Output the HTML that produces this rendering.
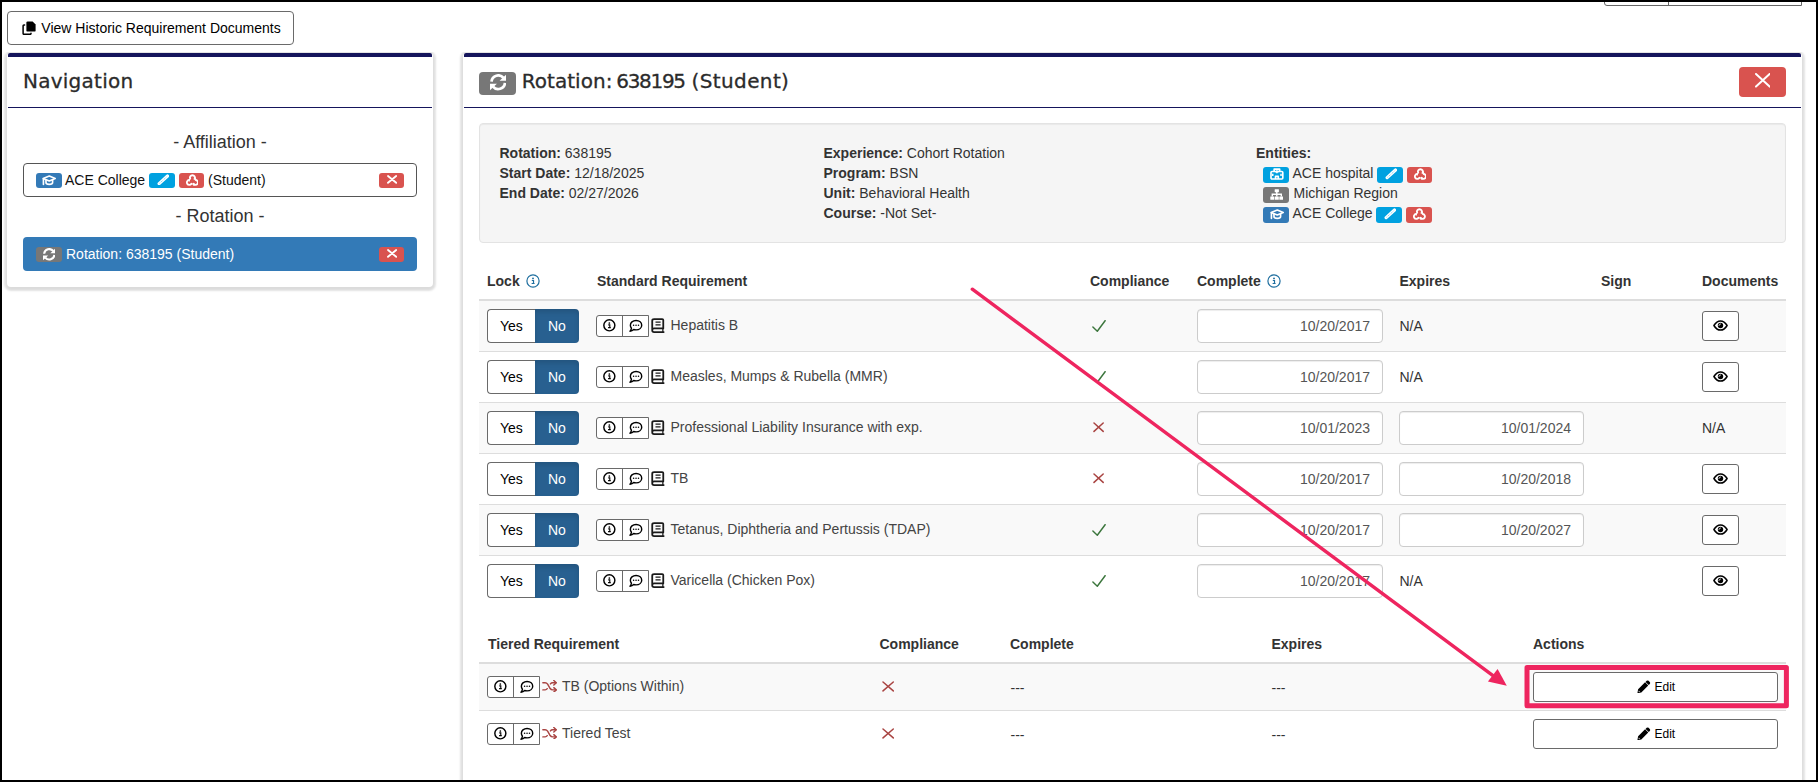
<!DOCTYPE html><html lang="en"><head><meta charset="utf-8"><title>Rotation: 638195 (Student)</title>
<style>
html,body{margin:0;padding:0;}
body{width:1818px;height:782px;position:relative;overflow:hidden;background:#fff;font-family:"Liberation Sans",sans-serif;font-size:14px;color:#333;}
.panel{position:absolute;background:#fff;border-radius:4px;box-shadow:0 1px 2px 3px rgba(0,0,0,.11),0 2px 2px 1px rgba(0,0,0,.03);box-sizing:border-box;clip-path:inset(-1px -9px -9px -9px);}
.bar{position:absolute;height:4px;background:#15155c;border-radius:2px 2px 0 0;}
.hl{position:absolute;height:1px;background:#15155c;}
.btn{position:absolute;box-sizing:border-box;border:1px solid #666;border-radius:4px;background:#fff;}
.frame{position:absolute;left:0;top:0;width:1814px;height:778px;border:2px solid #000;z-index:50;pointer-events:none;}
.th{font-weight:700;}
.inp{position:absolute;box-sizing:border-box;height:34px;border:1px solid #ccc;border-radius:4px;background:#fff;box-shadow:inset 0 1px 1px rgba(0,0,0,.075);}
</style></head><body>
<div style="position:absolute;left:1604px;top:-30px;width:198px;height:36px;box-sizing:border-box;border:1px solid #666;border-radius:3px 0 0 3px;background:#fff;"></div>
<div style="position:absolute;left:1668px;top:-30px;width:1px;height:35px;background:#666;"></div>
<div style="position:absolute;left:7px;top:11px;width:287px;height:34px;box-sizing:border-box;border:1px solid #6a6a6a;border-radius:4px;background:#fff;"></div>
<div style="position:absolute;left:22px;top:21px;"><svg width="14" height="14" viewBox="0 0 14 14" style="display:block;"><path fill="#000" d="M5.6 0.4 H10.6 L13.6 3.4 V9.4 Q13.6 10.6 12.4 10.6 H5.6 Q4.4 10.6 4.4 9.4 V1.6 Q4.4 0.4 5.6 0.4 Z"/><path fill="none" stroke="#000" stroke-width="1.5" stroke-linejoin="round" stroke-linecap="round" d="M2.6 3.9 H1.9 Q1.1 3.9 1.1 4.7 V12.5 Q1.1 13.3 1.9 13.3 H8.2 Q9.0 13.3 9.0 12.5 V12.2"/></svg></div>
<div style="position:absolute;left:41.3px;top:18.15px;line-height:20px;font-size:14px;font-weight:400;color:#000;font-family:'Liberation Sans',sans-serif;white-space:nowrap;">View Historic Requirement Documents</div>
<div class="panel" style="left:7px;top:53px;width:426px;height:234px;"></div><div class="bar" style="left:8px;top:53px;width:424px;"></div>
<div style="position:absolute;left:23px;top:71.38px;line-height:20px;font-size:20px;font-weight:400;color:#2b2b2b;font-family:'DejaVu Sans',sans-serif;white-space:nowrap;letter-spacing:0.25px;-webkit-text-stroke:0.3px #2b2b2b;">Navigation</div>
<div class="hl" style="left:8px;top:107px;width:424px;"></div>
<div style="position:absolute;left:8px;width:424px;text-align:center;top:130.26px;line-height:25px;font-size:18px;color:#333;">- Affiliation -</div>
<div style="position:absolute;left:23px;top:163px;width:394px;height:34px;box-sizing:border-box;border:1px solid #555;border-radius:4px;background:#fff;"></div>
<div style="position:absolute;left:36px;top:173px;width:26px;height:15px;background:#337ab7;border-radius:3px;"><div style="position:absolute;left:6.4px;top:2.2px;"><svg width="14.2" height="10.4" viewBox="0 0 15 11" style="display:block;"><g fill="none" stroke="#fff" stroke-width="1.75" stroke-linejoin="round" stroke-linecap="round"><path d="M1.2 3.7 L7.7 1.1 L14 3.7 L7.7 6.3 Z"/><path d="M4.2 5.4 V8 C4.2 10.6 11.2 10.6 11.2 8 V5.4"/><path d="M1.5 4.2 V10"/></g></svg></div></div>
<div style="position:absolute;left:65px;top:170.45px;line-height:20px;font-size:14px;font-weight:400;color:#111;font-family:'Liberation Sans',sans-serif;white-space:nowrap;">ACE College</div>
<div style="position:absolute;left:149px;top:173px;width:26px;height:15px;background:#00a1e0;border-radius:3px;"><div style="position:absolute;left:7.6px;top:0.8px;"><svg width="12.6" height="11.6" viewBox="0 0 13 12" style="display:block;"><path d="M2.2 10.0 L10.9 2.1" stroke="#fff" stroke-width="3.3" stroke-linecap="round" fill="none"/><path d="M2.6 9.6 L10.5 2.5" stroke="#00a1e0" stroke-width="0.8" stroke-dasharray="1.1 1" opacity=".75" fill="none"/></svg></div></div>
<div style="position:absolute;left:179px;top:173px;width:25px;height:15px;background:#d9534f;border-radius:3px;"><div style="position:absolute;left:6.6px;top:0.9px;"><svg width="12.8" height="12.2" viewBox="0 0 13 12.4" style="display:block;"><path d="M4.23 4.76 A2.5 2.5 0 1 1 8.77 4.76 M9.82 6.11 A2.5 2.5 0 1 1 7.55 10.03 M5.45 10.03 A2.5 2.5 0 1 1 3.18 6.11" fill="none" stroke="#fff" stroke-width="1.9" stroke-linecap="round"/><path fill="#fff" d="M7.6 5.9 L10.4 5.2 L9.3 2.9 Z M8.6 9.2 L6.3 10.9 L8.6 12.4 Z M1.0 6.4 L3.7 5.4 L4.0 8.0 Z"/></svg></div></div>
<div style="position:absolute;left:208px;top:170.45px;line-height:20px;font-size:14px;font-weight:400;color:#111;font-family:'Liberation Sans',sans-serif;white-space:nowrap;">(Student)</div>
<div style="position:absolute;left:379px;top:173px;width:25px;height:15px;background:#d9534f;border-radius:3px;"><div style="position:absolute;left:7.5px;top:2.3px;"><svg width="10.2" height="8.8" viewBox="0 0 10.2 8.8" style="display:block;"><path d="M1 1 L9.2 7.800000000000001 M9.2 1 L1 7.800000000000001" stroke="#fff" stroke-width="1.85" stroke-linecap="round" fill="none"/></svg></div></div>
<div style="position:absolute;left:8px;width:424px;text-align:center;top:204.26px;line-height:25px;font-size:18px;color:#333;">- Rotation -</div>
<div style="position:absolute;left:23px;top:237px;width:394px;height:34px;border-radius:4px;background:#337ab7;"></div>
<div style="position:absolute;left:36px;top:247px;width:26px;height:15px;background:#777;border-radius:3px;"><div style="position:absolute;left:6.7px;top:1.2px;"><svg width="12.6" height="12.6" viewBox="0 0 16 16" style="display:block;"><g fill="none" stroke="#fff" stroke-width="2.7"><path d="M1.45 7.3 A6.6 6.6 0 0 1 13.1 3.8"/><path d="M14.55 8.7 A6.6 6.6 0 0 1 2.9 12.2"/></g><path fill="#fff" d="M16 0.3 V6.6 H9.3 Z"/><path fill="#fff" d="M0 15.7 V9.4 H6.7 Z"/></svg></div></div>
<div style="position:absolute;left:66px;top:244.45px;line-height:20px;font-size:14px;font-weight:400;color:#fff;font-family:'Liberation Sans',sans-serif;white-space:nowrap;">Rotation: 638195 (Student)</div>
<div style="position:absolute;left:379px;top:247px;width:25px;height:15px;background:#d9534f;border-radius:3px;"><div style="position:absolute;left:7.5px;top:2.3px;"><svg width="10.2" height="8.8" viewBox="0 0 10.2 8.8" style="display:block;"><path d="M1 1 L9.2 7.800000000000001 M9.2 1 L1 7.800000000000001" stroke="#fff" stroke-width="1.85" stroke-linecap="round" fill="none"/></svg></div></div>
<div class="panel" style="left:463px;top:53px;width:1339px;height:760px;"></div><div class="bar" style="left:464px;top:53px;width:1337px;"></div>
<div style="position:absolute;left:479px;top:72px;width:37px;height:23px;background:#777;border-radius:4px;"><div style="position:absolute;left:10.8px;top:2.2px;"><svg width="16.5" height="16.5" viewBox="0 0 16 16" style="display:block;"><g fill="none" stroke="#fff" stroke-width="2.7"><path d="M1.45 7.3 A6.6 6.6 0 0 1 13.1 3.8"/><path d="M14.55 8.7 A6.6 6.6 0 0 1 2.9 12.2"/></g><path fill="#fff" d="M16 0.3 V6.6 H9.3 Z"/><path fill="#fff" d="M0 15.7 V9.4 H6.7 Z"/></svg></div></div>
<div style="position:absolute;left:521.7px;top:71.28px;line-height:20px;font-size:20px;font-weight:400;color:#2b2b2b;font-family:'DejaVu Sans',sans-serif;white-space:nowrap;-webkit-text-stroke:0.3px #2b2b2b;"><span style="letter-spacing:0.04px">Rotation:</span></div>
<div style="position:absolute;left:616.3px;top:71.28px;line-height:20px;font-size:20px;font-weight:400;color:#2b2b2b;font-family:'DejaVu Sans',sans-serif;white-space:nowrap;-webkit-text-stroke:0.3px #2b2b2b;"><span style="letter-spacing:-1.33px">638195</span></div>
<div style="position:absolute;left:691.6px;top:71.28px;line-height:20px;font-size:20px;font-weight:400;color:#2b2b2b;font-family:'DejaVu Sans',sans-serif;white-space:nowrap;-webkit-text-stroke:0.3px #2b2b2b;"><span style="letter-spacing:0.37px">(Student)</span></div>
<div style="position:absolute;left:1739px;top:67px;width:47px;height:30px;background:#d9534f;border-radius:4px;"><div style="position:absolute;left:15.9px;top:6.4px;"><svg width="15.6" height="14.6" viewBox="0 0 15.6 14.6" style="display:block;"><path d="M1 1 L14.6 13.6 M14.6 1 L1 13.6" stroke="#fff" stroke-width="2" stroke-linecap="round" fill="none"/></svg></div></div>
<div class="hl" style="left:464px;top:107px;width:1337px;"></div>
<div style="position:absolute;left:479px;top:123px;width:1307px;height:120px;box-sizing:border-box;background:#f5f5f5;border:1px solid #e3e3e3;border-radius:4px;box-shadow:inset 0 1px 1px rgba(0,0,0,.05);"></div>
<div style="position:absolute;left:499.5px;top:143.15px;line-height:20px;font-size:14px;font-weight:400;color:#333;font-family:'Liberation Sans',sans-serif;white-space:nowrap;"><b>Rotation:</b> 638195</div>
<div style="position:absolute;left:499.5px;top:163.15px;line-height:20px;font-size:14px;font-weight:400;color:#333;font-family:'Liberation Sans',sans-serif;white-space:nowrap;"><b>Start Date:</b> 12/18/2025</div>
<div style="position:absolute;left:499.5px;top:183.15px;line-height:20px;font-size:14px;font-weight:400;color:#333;font-family:'Liberation Sans',sans-serif;white-space:nowrap;"><b>End Date:</b> 02/27/2026</div>
<div style="position:absolute;left:823.5px;top:143.15px;line-height:20px;font-size:14px;font-weight:400;color:#333;font-family:'Liberation Sans',sans-serif;white-space:nowrap;"><b>Experience:</b> Cohort Rotation</div>
<div style="position:absolute;left:823.5px;top:163.15px;line-height:20px;font-size:14px;font-weight:400;color:#333;font-family:'Liberation Sans',sans-serif;white-space:nowrap;"><b>Program:</b> BSN</div>
<div style="position:absolute;left:823.5px;top:183.15px;line-height:20px;font-size:14px;font-weight:400;color:#333;font-family:'Liberation Sans',sans-serif;white-space:nowrap;"><b>Unit:</b> Behavioral Health</div>
<div style="position:absolute;left:823.5px;top:203.15px;line-height:20px;font-size:14px;font-weight:400;color:#333;font-family:'Liberation Sans',sans-serif;white-space:nowrap;"><b>Course:</b> -Not Set-</div>
<div style="position:absolute;left:1256px;top:143.15px;line-height:20px;font-size:14px;font-weight:400;color:#333;font-family:'Liberation Sans',sans-serif;white-space:nowrap;"><b>Entities:</b></div>
<div style="position:absolute;left:1263px;top:167px;width:26px;height:16px;background:#00a1e0;border-radius:3px;"><div style="position:absolute;left:7.2px;top:1.3px;"><svg width="13.8" height="11.8" viewBox="0 0 14 12" style="display:block;"><g fill="none" stroke="#fff" stroke-width="1.7" stroke-linejoin="round"><rect x="1" y="3.6" width="12" height="7.6" rx="1"/><path d="M4.2 3.6 V1.2 H9.8 V3.6"/><path d="M5.6 11.2 V8.6 H8.4 V11.2"/></g><path d="M7 2.2 V5.4 M5.4 3.8 H8.6 M2.8 5.8 V8.2 M11.2 5.8 V8.2" stroke="#fff" stroke-width="1.5" fill="none"/></svg></div></div>
<div style="position:absolute;left:1292.5px;top:163.15px;line-height:20px;font-size:14px;font-weight:400;color:#333;font-family:'Liberation Sans',sans-serif;white-space:nowrap;">ACE hospital</div>
<div style="position:absolute;left:1377px;top:167px;width:26px;height:16px;background:#00a1e0;border-radius:3px;"><div style="position:absolute;left:7.6px;top:1.3px;"><svg width="12.6" height="11.6" viewBox="0 0 13 12" style="display:block;"><path d="M2.2 10.0 L10.9 2.1" stroke="#fff" stroke-width="3.3" stroke-linecap="round" fill="none"/><path d="M2.6 9.6 L10.5 2.5" stroke="#00a1e0" stroke-width="0.8" stroke-dasharray="1.1 1" opacity=".75" fill="none"/></svg></div></div>
<div style="position:absolute;left:1407px;top:167px;width:25px;height:16px;background:#d9534f;border-radius:3px;"><div style="position:absolute;left:6.6px;top:1.1px;"><svg width="12.8" height="12.2" viewBox="0 0 13 12.4" style="display:block;"><path d="M4.23 4.76 A2.5 2.5 0 1 1 8.77 4.76 M9.82 6.11 A2.5 2.5 0 1 1 7.55 10.03 M5.45 10.03 A2.5 2.5 0 1 1 3.18 6.11" fill="none" stroke="#fff" stroke-width="1.9" stroke-linecap="round"/><path fill="#fff" d="M7.6 5.9 L10.4 5.2 L9.3 2.9 Z M8.6 9.2 L6.3 10.9 L8.6 12.4 Z M1.0 6.4 L3.7 5.4 L4.0 8.0 Z"/></svg></div></div>
<div style="position:absolute;left:1263px;top:187px;width:26px;height:16px;background:#777;border-radius:3px;"><div style="position:absolute;left:6.8px;top:2.2px;"><svg width="13.6" height="11" viewBox="0 0 13 11" style="display:block;"><g fill="#fff"><rect x="4.4" y="0.2" width="4.2" height="3" rx=".4"/><rect x="0" y="7.4" width="4" height="3.4" rx=".4"/><rect x="4.5" y="7.4" width="4" height="3.4" rx=".4"/><rect x="9" y="7.4" width="4" height="3.4" rx=".4"/></g><path d="M6.5 3 V7.6 M2 7.6 V5.3 H11 V7.6" fill="none" stroke="#fff" stroke-width="1.4"/></svg></div></div>
<div style="position:absolute;left:1293.5px;top:183.15px;line-height:20px;font-size:14px;font-weight:400;color:#333;font-family:'Liberation Sans',sans-serif;white-space:nowrap;">Michigan Region</div>
<div style="position:absolute;left:1263px;top:207px;width:26px;height:16px;background:#337ab7;border-radius:3px;"><div style="position:absolute;left:6.5px;top:2.4px;"><svg width="14.2" height="10.4" viewBox="0 0 15 11" style="display:block;"><g fill="none" stroke="#fff" stroke-width="1.75" stroke-linejoin="round" stroke-linecap="round"><path d="M1.2 3.7 L7.7 1.1 L14 3.7 L7.7 6.3 Z"/><path d="M4.2 5.4 V8 C4.2 10.6 11.2 10.6 11.2 8 V5.4"/><path d="M1.5 4.2 V10"/></g></svg></div></div>
<div style="position:absolute;left:1292.5px;top:203.15px;line-height:20px;font-size:14px;font-weight:400;color:#333;font-family:'Liberation Sans',sans-serif;white-space:nowrap;">ACE College</div>
<div style="position:absolute;left:1376px;top:207px;width:26px;height:16px;background:#00a1e0;border-radius:3px;"><div style="position:absolute;left:7.6px;top:1.3px;"><svg width="12.6" height="11.6" viewBox="0 0 13 12" style="display:block;"><path d="M2.2 10.0 L10.9 2.1" stroke="#fff" stroke-width="3.3" stroke-linecap="round" fill="none"/><path d="M2.6 9.6 L10.5 2.5" stroke="#00a1e0" stroke-width="0.8" stroke-dasharray="1.1 1" opacity=".75" fill="none"/></svg></div></div>
<div style="position:absolute;left:1406px;top:207px;width:26px;height:16px;background:#d9534f;border-radius:3px;"><div style="position:absolute;left:6.9px;top:1.1px;"><svg width="12.8" height="12.2" viewBox="0 0 13 12.4" style="display:block;"><path d="M4.23 4.76 A2.5 2.5 0 1 1 8.77 4.76 M9.82 6.11 A2.5 2.5 0 1 1 7.55 10.03 M5.45 10.03 A2.5 2.5 0 1 1 3.18 6.11" fill="none" stroke="#fff" stroke-width="1.9" stroke-linecap="round"/><path fill="#fff" d="M7.6 5.9 L10.4 5.2 L9.3 2.9 Z M8.6 9.2 L6.3 10.9 L8.6 12.4 Z M1.0 6.4 L3.7 5.4 L4.0 8.0 Z"/></svg></div></div>
<div style="position:absolute;left:487px;top:271.15px;line-height:20px;font-size:14px;font-weight:700;color:#333;font-family:'Liberation Sans',sans-serif;white-space:nowrap;">Lock</div>
<div style="position:absolute;left:526px;top:274px;"><svg width="14" height="14" viewBox="0 0 14 14" style="display:block;"><circle cx="7" cy="7" r="6.1" fill="none" stroke="#1f6f9f" stroke-width="1.2"/><circle cx="7" cy="4.4" r="0.95" fill="#1f6f9f"/><path d="M5.8 6.5 H7.5 V9.3 M5.6 9.5 H8.6" stroke="#1f6f9f" stroke-width="1.2" fill="none"/></svg></div>
<div style="position:absolute;left:597px;top:271.15px;line-height:20px;font-size:14px;font-weight:700;color:#333;font-family:'Liberation Sans',sans-serif;white-space:nowrap;">Standard Requirement</div>
<div style="position:absolute;left:1090px;top:271.15px;line-height:20px;font-size:14px;font-weight:700;color:#333;font-family:'Liberation Sans',sans-serif;white-space:nowrap;">Compliance</div>
<div style="position:absolute;left:1197px;top:271.15px;line-height:20px;font-size:14px;font-weight:700;color:#333;font-family:'Liberation Sans',sans-serif;white-space:nowrap;">Complete</div>
<div style="position:absolute;left:1267px;top:274px;"><svg width="14" height="14" viewBox="0 0 14 14" style="display:block;"><circle cx="7" cy="7" r="6.1" fill="none" stroke="#1f6f9f" stroke-width="1.2"/><circle cx="7" cy="4.4" r="0.95" fill="#1f6f9f"/><path d="M5.8 6.5 H7.5 V9.3 M5.6 9.5 H8.6" stroke="#1f6f9f" stroke-width="1.2" fill="none"/></svg></div>
<div style="position:absolute;left:1399.5px;top:271.15px;line-height:20px;font-size:14px;font-weight:700;color:#333;font-family:'Liberation Sans',sans-serif;white-space:nowrap;">Expires</div>
<div style="position:absolute;left:1601px;top:271.15px;line-height:20px;font-size:14px;font-weight:700;color:#333;font-family:'Liberation Sans',sans-serif;white-space:nowrap;">Sign</div>
<div style="position:absolute;left:1702px;top:271.15px;line-height:20px;font-size:14px;font-weight:700;color:#333;font-family:'Liberation Sans',sans-serif;white-space:nowrap;">Documents</div>
<div style="position:absolute;left:479px;top:299px;width:1307px;height:2px;background:#ddd;"></div>
<div style="position:absolute;left:479px;top:301px;width:1307px;height:50px;background:#f9f9f9;"></div>
<div style="position:absolute;left:487px;top:309px;width:49px;height:34px;box-sizing:border-box;border:1px solid #6a6a6a;border-right:none;border-radius:4px 0 0 4px;background:#fff;"></div>
<div style="position:absolute;left:535px;top:309px;width:44px;height:34px;border-radius:0 4px 4px 0;background:#286090;box-shadow:inset 0 3px 5px rgba(0,0,0,.125);"></div>
<div style="position:absolute;left:500px;top:316.15px;line-height:20px;font-size:14px;font-weight:400;color:#000;font-family:'Liberation Sans',sans-serif;white-space:nowrap;">Yes</div>
<div style="position:absolute;left:548px;top:316.15px;line-height:20px;font-size:14px;font-weight:400;color:#fff;font-family:'Liberation Sans',sans-serif;white-space:nowrap;">No</div>
<div style="position:absolute;left:596px;top:315px;width:53px;height:22px;box-sizing:border-box;border:1px solid #6a6a6a;border-radius:3px 0 0 3px;background:#fff;"></div><div style="position:absolute;left:622px;top:315px;width:1px;height:22px;background:#6a6a6a;"></div><div style="position:absolute;left:603.2px;top:319.4px;"><svg width="12.7" height="12.7" viewBox="0 0 14 14" style="display:block;"><circle cx="7" cy="7" r="6.1" fill="none" stroke="#000" stroke-width="1.6"/><circle cx="7" cy="4.4" r="0.95" fill="#000"/><path d="M5.8 6.5 H7.5 V9.3 M5.6 9.5 H8.6" stroke="#000" stroke-width="1.2" fill="none"/></svg></div><div style="position:absolute;left:628.9px;top:318.6px;"><svg width="13.7" height="13.7" viewBox="0 0 14 13.5" style="display:block;"><path d="M7.2 1.3 C10.6 1.3 13 3.4 13 6.1 C13 8.8 10.6 10.9 7.2 10.9 C6.3 10.9 5.5 10.75 4.8 10.5 C3.9 11.4 2.6 12.1 1 12.2 C1.9 11.3 2.4 10.3 2.5 9.2 C1.8 8.3 1.4 7.3 1.4 6.1 C1.4 3.4 3.8 1.3 7.2 1.3 Z" fill="none" stroke="#000" stroke-width="1.45" stroke-linejoin="round"/><circle cx="4.7" cy="6.1" r=".8" fill="#000"/><circle cx="7.2" cy="6.1" r=".8" fill="#000"/><circle cx="9.7" cy="6.1" r=".8" fill="#000"/></svg></div>
<div style="position:absolute;left:651.2px;top:317.6px;"><svg width="13.8" height="15.33" viewBox="0 0 13.5 15" style="display:block;"><path d="M3 1 H11 Q12 1 12 2 V10.2 H3 Q1.2 10.2 1.2 12 Q1.2 13.8 3 13.8 H12.4 M1.2 12 V2.8 Q1.2 1 3 1" fill="none" stroke="#1a1a1a" stroke-width="1.75" stroke-linejoin="round" stroke-linecap="round"/><path d="M4.4 4.1 H9.4 M4.4 6.7 H9.4" stroke="#1a1a1a" stroke-width="1.3" fill="none"/><path d="M11.6 10.4 V13.6" stroke="#1a1a1a" stroke-width="1.2"/></svg></div>
<div style="position:absolute;left:670.5px;top:315.15px;line-height:20px;font-size:14px;font-weight:400;color:#444;font-family:'Liberation Sans',sans-serif;white-space:nowrap;">Hepatitis B</div>
<div style="position:absolute;left:1092px;top:320.3px;"><svg width="14" height="13" viewBox="0 0 14 13" style="display:block;"><path d="M0.9 7.0 L5.3 11.2 L13.1 0.7" fill="none" stroke="#3c763d" stroke-width="1.45" stroke-linecap="round" stroke-linejoin="round"/></svg></div>
<div class="inp" style="left:1197px;top:309px;width:186px;"></div>
<div style="position:absolute;left:1197px;top:316.15px;line-height:20px;font-size:14px;font-weight:400;color:#555;font-family:'Liberation Sans',sans-serif;white-space:nowrap;width:173px;text-align:right;">10/20/2017</div>
<div style="position:absolute;left:1399.5px;top:316.15px;line-height:20px;font-size:14px;font-weight:400;color:#333;font-family:'Liberation Sans',sans-serif;white-space:nowrap;">N/A</div>
<div style="position:absolute;left:1702px;top:311px;width:37px;height:30px;box-sizing:border-box;border:1px solid #6a6a6a;border-radius:3px;background:#fff;"><div style="position:absolute;left:10.1px;top:8.3px;"><svg width="15" height="11" viewBox="0 0 15 11" style="display:block;"><path d="M0.9 5.5 C3 2 5.4 0.9 7.5 0.9 C9.6 0.9 12 2 14.1 5.5 C12 9 9.6 10.1 7.5 10.1 C5.4 10.1 3 9 0.9 5.5 Z" fill="none" stroke="#000" stroke-width="1.5" stroke-linejoin="round"/><circle cx="7.5" cy="5.5" r="2.7" fill="#000"/><path d="M7.6 3.9 A1.7 1.7 0 0 0 5.9 5.5" fill="none" stroke="#fff" stroke-width="0.9" stroke-linecap="round" opacity=".85"/></svg></div></div>
<div style="position:absolute;left:479px;top:351px;width:1307px;height:1px;background:#ddd;"></div>
<div style="position:absolute;left:487px;top:360px;width:49px;height:34px;box-sizing:border-box;border:1px solid #6a6a6a;border-right:none;border-radius:4px 0 0 4px;background:#fff;"></div>
<div style="position:absolute;left:535px;top:360px;width:44px;height:34px;border-radius:0 4px 4px 0;background:#286090;box-shadow:inset 0 3px 5px rgba(0,0,0,.125);"></div>
<div style="position:absolute;left:500px;top:367.15px;line-height:20px;font-size:14px;font-weight:400;color:#000;font-family:'Liberation Sans',sans-serif;white-space:nowrap;">Yes</div>
<div style="position:absolute;left:548px;top:367.15px;line-height:20px;font-size:14px;font-weight:400;color:#fff;font-family:'Liberation Sans',sans-serif;white-space:nowrap;">No</div>
<div style="position:absolute;left:596px;top:366px;width:53px;height:22px;box-sizing:border-box;border:1px solid #6a6a6a;border-radius:3px 0 0 3px;background:#fff;"></div><div style="position:absolute;left:622px;top:366px;width:1px;height:22px;background:#6a6a6a;"></div><div style="position:absolute;left:603.2px;top:370.4px;"><svg width="12.7" height="12.7" viewBox="0 0 14 14" style="display:block;"><circle cx="7" cy="7" r="6.1" fill="none" stroke="#000" stroke-width="1.6"/><circle cx="7" cy="4.4" r="0.95" fill="#000"/><path d="M5.8 6.5 H7.5 V9.3 M5.6 9.5 H8.6" stroke="#000" stroke-width="1.2" fill="none"/></svg></div><div style="position:absolute;left:628.9px;top:369.6px;"><svg width="13.7" height="13.7" viewBox="0 0 14 13.5" style="display:block;"><path d="M7.2 1.3 C10.6 1.3 13 3.4 13 6.1 C13 8.8 10.6 10.9 7.2 10.9 C6.3 10.9 5.5 10.75 4.8 10.5 C3.9 11.4 2.6 12.1 1 12.2 C1.9 11.3 2.4 10.3 2.5 9.2 C1.8 8.3 1.4 7.3 1.4 6.1 C1.4 3.4 3.8 1.3 7.2 1.3 Z" fill="none" stroke="#000" stroke-width="1.45" stroke-linejoin="round"/><circle cx="4.7" cy="6.1" r=".8" fill="#000"/><circle cx="7.2" cy="6.1" r=".8" fill="#000"/><circle cx="9.7" cy="6.1" r=".8" fill="#000"/></svg></div>
<div style="position:absolute;left:651.2px;top:368.6px;"><svg width="13.8" height="15.33" viewBox="0 0 13.5 15" style="display:block;"><path d="M3 1 H11 Q12 1 12 2 V10.2 H3 Q1.2 10.2 1.2 12 Q1.2 13.8 3 13.8 H12.4 M1.2 12 V2.8 Q1.2 1 3 1" fill="none" stroke="#1a1a1a" stroke-width="1.75" stroke-linejoin="round" stroke-linecap="round"/><path d="M4.4 4.1 H9.4 M4.4 6.7 H9.4" stroke="#1a1a1a" stroke-width="1.3" fill="none"/><path d="M11.6 10.4 V13.6" stroke="#1a1a1a" stroke-width="1.2"/></svg></div>
<div style="position:absolute;left:670.5px;top:366.15px;line-height:20px;font-size:14px;font-weight:400;color:#444;font-family:'Liberation Sans',sans-serif;white-space:nowrap;">Measles, Mumps &amp; Rubella (MMR)</div>
<div style="position:absolute;left:1092px;top:371.3px;"><svg width="14" height="13" viewBox="0 0 14 13" style="display:block;"><path d="M0.9 7.0 L5.3 11.2 L13.1 0.7" fill="none" stroke="#3c763d" stroke-width="1.45" stroke-linecap="round" stroke-linejoin="round"/></svg></div>
<div class="inp" style="left:1197px;top:360px;width:186px;"></div>
<div style="position:absolute;left:1197px;top:367.15px;line-height:20px;font-size:14px;font-weight:400;color:#555;font-family:'Liberation Sans',sans-serif;white-space:nowrap;width:173px;text-align:right;">10/20/2017</div>
<div style="position:absolute;left:1399.5px;top:367.15px;line-height:20px;font-size:14px;font-weight:400;color:#333;font-family:'Liberation Sans',sans-serif;white-space:nowrap;">N/A</div>
<div style="position:absolute;left:1702px;top:362px;width:37px;height:30px;box-sizing:border-box;border:1px solid #6a6a6a;border-radius:3px;background:#fff;"><div style="position:absolute;left:10.1px;top:8.3px;"><svg width="15" height="11" viewBox="0 0 15 11" style="display:block;"><path d="M0.9 5.5 C3 2 5.4 0.9 7.5 0.9 C9.6 0.9 12 2 14.1 5.5 C12 9 9.6 10.1 7.5 10.1 C5.4 10.1 3 9 0.9 5.5 Z" fill="none" stroke="#000" stroke-width="1.5" stroke-linejoin="round"/><circle cx="7.5" cy="5.5" r="2.7" fill="#000"/><path d="M7.6 3.9 A1.7 1.7 0 0 0 5.9 5.5" fill="none" stroke="#fff" stroke-width="0.9" stroke-linecap="round" opacity=".85"/></svg></div></div>
<div style="position:absolute;left:479px;top:403px;width:1307px;height:50px;background:#f9f9f9;"></div>
<div style="position:absolute;left:479px;top:402px;width:1307px;height:1px;background:#ddd;"></div>
<div style="position:absolute;left:487px;top:411px;width:49px;height:34px;box-sizing:border-box;border:1px solid #6a6a6a;border-right:none;border-radius:4px 0 0 4px;background:#fff;"></div>
<div style="position:absolute;left:535px;top:411px;width:44px;height:34px;border-radius:0 4px 4px 0;background:#286090;box-shadow:inset 0 3px 5px rgba(0,0,0,.125);"></div>
<div style="position:absolute;left:500px;top:418.15px;line-height:20px;font-size:14px;font-weight:400;color:#000;font-family:'Liberation Sans',sans-serif;white-space:nowrap;">Yes</div>
<div style="position:absolute;left:548px;top:418.15px;line-height:20px;font-size:14px;font-weight:400;color:#fff;font-family:'Liberation Sans',sans-serif;white-space:nowrap;">No</div>
<div style="position:absolute;left:596px;top:417px;width:53px;height:22px;box-sizing:border-box;border:1px solid #6a6a6a;border-radius:3px 0 0 3px;background:#fff;"></div><div style="position:absolute;left:622px;top:417px;width:1px;height:22px;background:#6a6a6a;"></div><div style="position:absolute;left:603.2px;top:421.4px;"><svg width="12.7" height="12.7" viewBox="0 0 14 14" style="display:block;"><circle cx="7" cy="7" r="6.1" fill="none" stroke="#000" stroke-width="1.6"/><circle cx="7" cy="4.4" r="0.95" fill="#000"/><path d="M5.8 6.5 H7.5 V9.3 M5.6 9.5 H8.6" stroke="#000" stroke-width="1.2" fill="none"/></svg></div><div style="position:absolute;left:628.9px;top:420.6px;"><svg width="13.7" height="13.7" viewBox="0 0 14 13.5" style="display:block;"><path d="M7.2 1.3 C10.6 1.3 13 3.4 13 6.1 C13 8.8 10.6 10.9 7.2 10.9 C6.3 10.9 5.5 10.75 4.8 10.5 C3.9 11.4 2.6 12.1 1 12.2 C1.9 11.3 2.4 10.3 2.5 9.2 C1.8 8.3 1.4 7.3 1.4 6.1 C1.4 3.4 3.8 1.3 7.2 1.3 Z" fill="none" stroke="#000" stroke-width="1.45" stroke-linejoin="round"/><circle cx="4.7" cy="6.1" r=".8" fill="#000"/><circle cx="7.2" cy="6.1" r=".8" fill="#000"/><circle cx="9.7" cy="6.1" r=".8" fill="#000"/></svg></div>
<div style="position:absolute;left:651.2px;top:419.6px;"><svg width="13.8" height="15.33" viewBox="0 0 13.5 15" style="display:block;"><path d="M3 1 H11 Q12 1 12 2 V10.2 H3 Q1.2 10.2 1.2 12 Q1.2 13.8 3 13.8 H12.4 M1.2 12 V2.8 Q1.2 1 3 1" fill="none" stroke="#1a1a1a" stroke-width="1.75" stroke-linejoin="round" stroke-linecap="round"/><path d="M4.4 4.1 H9.4 M4.4 6.7 H9.4" stroke="#1a1a1a" stroke-width="1.3" fill="none"/><path d="M11.6 10.4 V13.6" stroke="#1a1a1a" stroke-width="1.2"/></svg></div>
<div style="position:absolute;left:670.5px;top:417.15px;line-height:20px;font-size:14px;font-weight:400;color:#444;font-family:'Liberation Sans',sans-serif;white-space:nowrap;">Professional Liability Insurance with exp.</div>
<div style="position:absolute;left:1093.1px;top:422.4px;"><svg width="11.2" height="10.4" viewBox="0 0 11.2 10.4" style="display:block;"><path d="M1 1 L10.2 9.4 M10.2 1 L1 9.4" stroke="#a94442" stroke-width="1.5" stroke-linecap="round" fill="none"/></svg></div>
<div class="inp" style="left:1197px;top:411px;width:186px;"></div>
<div style="position:absolute;left:1197px;top:418.15px;line-height:20px;font-size:14px;font-weight:400;color:#555;font-family:'Liberation Sans',sans-serif;white-space:nowrap;width:173px;text-align:right;">10/01/2023</div>
<div class="inp" style="left:1399px;top:411px;width:185px;"></div>
<div style="position:absolute;left:1399px;top:418.15px;line-height:20px;font-size:14px;font-weight:400;color:#555;font-family:'Liberation Sans',sans-serif;white-space:nowrap;width:172px;text-align:right;">10/01/2024</div>
<div style="position:absolute;left:1702px;top:418.15px;line-height:20px;font-size:14px;font-weight:400;color:#333;font-family:'Liberation Sans',sans-serif;white-space:nowrap;">N/A</div>
<div style="position:absolute;left:479px;top:453px;width:1307px;height:1px;background:#ddd;"></div>
<div style="position:absolute;left:487px;top:462px;width:49px;height:34px;box-sizing:border-box;border:1px solid #6a6a6a;border-right:none;border-radius:4px 0 0 4px;background:#fff;"></div>
<div style="position:absolute;left:535px;top:462px;width:44px;height:34px;border-radius:0 4px 4px 0;background:#286090;box-shadow:inset 0 3px 5px rgba(0,0,0,.125);"></div>
<div style="position:absolute;left:500px;top:469.15px;line-height:20px;font-size:14px;font-weight:400;color:#000;font-family:'Liberation Sans',sans-serif;white-space:nowrap;">Yes</div>
<div style="position:absolute;left:548px;top:469.15px;line-height:20px;font-size:14px;font-weight:400;color:#fff;font-family:'Liberation Sans',sans-serif;white-space:nowrap;">No</div>
<div style="position:absolute;left:596px;top:468px;width:53px;height:22px;box-sizing:border-box;border:1px solid #6a6a6a;border-radius:3px 0 0 3px;background:#fff;"></div><div style="position:absolute;left:622px;top:468px;width:1px;height:22px;background:#6a6a6a;"></div><div style="position:absolute;left:603.2px;top:472.4px;"><svg width="12.7" height="12.7" viewBox="0 0 14 14" style="display:block;"><circle cx="7" cy="7" r="6.1" fill="none" stroke="#000" stroke-width="1.6"/><circle cx="7" cy="4.4" r="0.95" fill="#000"/><path d="M5.8 6.5 H7.5 V9.3 M5.6 9.5 H8.6" stroke="#000" stroke-width="1.2" fill="none"/></svg></div><div style="position:absolute;left:628.9px;top:471.6px;"><svg width="13.7" height="13.7" viewBox="0 0 14 13.5" style="display:block;"><path d="M7.2 1.3 C10.6 1.3 13 3.4 13 6.1 C13 8.8 10.6 10.9 7.2 10.9 C6.3 10.9 5.5 10.75 4.8 10.5 C3.9 11.4 2.6 12.1 1 12.2 C1.9 11.3 2.4 10.3 2.5 9.2 C1.8 8.3 1.4 7.3 1.4 6.1 C1.4 3.4 3.8 1.3 7.2 1.3 Z" fill="none" stroke="#000" stroke-width="1.45" stroke-linejoin="round"/><circle cx="4.7" cy="6.1" r=".8" fill="#000"/><circle cx="7.2" cy="6.1" r=".8" fill="#000"/><circle cx="9.7" cy="6.1" r=".8" fill="#000"/></svg></div>
<div style="position:absolute;left:651.2px;top:470.6px;"><svg width="13.8" height="15.33" viewBox="0 0 13.5 15" style="display:block;"><path d="M3 1 H11 Q12 1 12 2 V10.2 H3 Q1.2 10.2 1.2 12 Q1.2 13.8 3 13.8 H12.4 M1.2 12 V2.8 Q1.2 1 3 1" fill="none" stroke="#1a1a1a" stroke-width="1.75" stroke-linejoin="round" stroke-linecap="round"/><path d="M4.4 4.1 H9.4 M4.4 6.7 H9.4" stroke="#1a1a1a" stroke-width="1.3" fill="none"/><path d="M11.6 10.4 V13.6" stroke="#1a1a1a" stroke-width="1.2"/></svg></div>
<div style="position:absolute;left:670.5px;top:468.15px;line-height:20px;font-size:14px;font-weight:400;color:#444;font-family:'Liberation Sans',sans-serif;white-space:nowrap;">TB</div>
<div style="position:absolute;left:1093.1px;top:473.4px;"><svg width="11.2" height="10.4" viewBox="0 0 11.2 10.4" style="display:block;"><path d="M1 1 L10.2 9.4 M10.2 1 L1 9.4" stroke="#a94442" stroke-width="1.5" stroke-linecap="round" fill="none"/></svg></div>
<div class="inp" style="left:1197px;top:462px;width:186px;"></div>
<div style="position:absolute;left:1197px;top:469.15px;line-height:20px;font-size:14px;font-weight:400;color:#555;font-family:'Liberation Sans',sans-serif;white-space:nowrap;width:173px;text-align:right;">10/20/2017</div>
<div class="inp" style="left:1399px;top:462px;width:185px;"></div>
<div style="position:absolute;left:1399px;top:469.15px;line-height:20px;font-size:14px;font-weight:400;color:#555;font-family:'Liberation Sans',sans-serif;white-space:nowrap;width:172px;text-align:right;">10/20/2018</div>
<div style="position:absolute;left:1702px;top:464px;width:37px;height:30px;box-sizing:border-box;border:1px solid #6a6a6a;border-radius:3px;background:#fff;"><div style="position:absolute;left:10.1px;top:8.3px;"><svg width="15" height="11" viewBox="0 0 15 11" style="display:block;"><path d="M0.9 5.5 C3 2 5.4 0.9 7.5 0.9 C9.6 0.9 12 2 14.1 5.5 C12 9 9.6 10.1 7.5 10.1 C5.4 10.1 3 9 0.9 5.5 Z" fill="none" stroke="#000" stroke-width="1.5" stroke-linejoin="round"/><circle cx="7.5" cy="5.5" r="2.7" fill="#000"/><path d="M7.6 3.9 A1.7 1.7 0 0 0 5.9 5.5" fill="none" stroke="#fff" stroke-width="0.9" stroke-linecap="round" opacity=".85"/></svg></div></div>
<div style="position:absolute;left:479px;top:505px;width:1307px;height:50px;background:#f9f9f9;"></div>
<div style="position:absolute;left:479px;top:504px;width:1307px;height:1px;background:#ddd;"></div>
<div style="position:absolute;left:487px;top:513px;width:49px;height:34px;box-sizing:border-box;border:1px solid #6a6a6a;border-right:none;border-radius:4px 0 0 4px;background:#fff;"></div>
<div style="position:absolute;left:535px;top:513px;width:44px;height:34px;border-radius:0 4px 4px 0;background:#286090;box-shadow:inset 0 3px 5px rgba(0,0,0,.125);"></div>
<div style="position:absolute;left:500px;top:520.15px;line-height:20px;font-size:14px;font-weight:400;color:#000;font-family:'Liberation Sans',sans-serif;white-space:nowrap;">Yes</div>
<div style="position:absolute;left:548px;top:520.15px;line-height:20px;font-size:14px;font-weight:400;color:#fff;font-family:'Liberation Sans',sans-serif;white-space:nowrap;">No</div>
<div style="position:absolute;left:596px;top:519px;width:53px;height:22px;box-sizing:border-box;border:1px solid #6a6a6a;border-radius:3px 0 0 3px;background:#fff;"></div><div style="position:absolute;left:622px;top:519px;width:1px;height:22px;background:#6a6a6a;"></div><div style="position:absolute;left:603.2px;top:523.4px;"><svg width="12.7" height="12.7" viewBox="0 0 14 14" style="display:block;"><circle cx="7" cy="7" r="6.1" fill="none" stroke="#000" stroke-width="1.6"/><circle cx="7" cy="4.4" r="0.95" fill="#000"/><path d="M5.8 6.5 H7.5 V9.3 M5.6 9.5 H8.6" stroke="#000" stroke-width="1.2" fill="none"/></svg></div><div style="position:absolute;left:628.9px;top:522.6px;"><svg width="13.7" height="13.7" viewBox="0 0 14 13.5" style="display:block;"><path d="M7.2 1.3 C10.6 1.3 13 3.4 13 6.1 C13 8.8 10.6 10.9 7.2 10.9 C6.3 10.9 5.5 10.75 4.8 10.5 C3.9 11.4 2.6 12.1 1 12.2 C1.9 11.3 2.4 10.3 2.5 9.2 C1.8 8.3 1.4 7.3 1.4 6.1 C1.4 3.4 3.8 1.3 7.2 1.3 Z" fill="none" stroke="#000" stroke-width="1.45" stroke-linejoin="round"/><circle cx="4.7" cy="6.1" r=".8" fill="#000"/><circle cx="7.2" cy="6.1" r=".8" fill="#000"/><circle cx="9.7" cy="6.1" r=".8" fill="#000"/></svg></div>
<div style="position:absolute;left:651.2px;top:521.6px;"><svg width="13.8" height="15.33" viewBox="0 0 13.5 15" style="display:block;"><path d="M3 1 H11 Q12 1 12 2 V10.2 H3 Q1.2 10.2 1.2 12 Q1.2 13.8 3 13.8 H12.4 M1.2 12 V2.8 Q1.2 1 3 1" fill="none" stroke="#1a1a1a" stroke-width="1.75" stroke-linejoin="round" stroke-linecap="round"/><path d="M4.4 4.1 H9.4 M4.4 6.7 H9.4" stroke="#1a1a1a" stroke-width="1.3" fill="none"/><path d="M11.6 10.4 V13.6" stroke="#1a1a1a" stroke-width="1.2"/></svg></div>
<div style="position:absolute;left:670.5px;top:519.15px;line-height:20px;font-size:14px;font-weight:400;color:#444;font-family:'Liberation Sans',sans-serif;white-space:nowrap;">Tetanus, Diphtheria and Pertussis (TDAP)</div>
<div style="position:absolute;left:1092px;top:524.3px;"><svg width="14" height="13" viewBox="0 0 14 13" style="display:block;"><path d="M0.9 7.0 L5.3 11.2 L13.1 0.7" fill="none" stroke="#3c763d" stroke-width="1.45" stroke-linecap="round" stroke-linejoin="round"/></svg></div>
<div class="inp" style="left:1197px;top:513px;width:186px;"></div>
<div style="position:absolute;left:1197px;top:520.15px;line-height:20px;font-size:14px;font-weight:400;color:#555;font-family:'Liberation Sans',sans-serif;white-space:nowrap;width:173px;text-align:right;">10/20/2017</div>
<div class="inp" style="left:1399px;top:513px;width:185px;"></div>
<div style="position:absolute;left:1399px;top:520.15px;line-height:20px;font-size:14px;font-weight:400;color:#555;font-family:'Liberation Sans',sans-serif;white-space:nowrap;width:172px;text-align:right;">10/20/2027</div>
<div style="position:absolute;left:1702px;top:515px;width:37px;height:30px;box-sizing:border-box;border:1px solid #6a6a6a;border-radius:3px;background:#fff;"><div style="position:absolute;left:10.1px;top:8.3px;"><svg width="15" height="11" viewBox="0 0 15 11" style="display:block;"><path d="M0.9 5.5 C3 2 5.4 0.9 7.5 0.9 C9.6 0.9 12 2 14.1 5.5 C12 9 9.6 10.1 7.5 10.1 C5.4 10.1 3 9 0.9 5.5 Z" fill="none" stroke="#000" stroke-width="1.5" stroke-linejoin="round"/><circle cx="7.5" cy="5.5" r="2.7" fill="#000"/><path d="M7.6 3.9 A1.7 1.7 0 0 0 5.9 5.5" fill="none" stroke="#fff" stroke-width="0.9" stroke-linecap="round" opacity=".85"/></svg></div></div>
<div style="position:absolute;left:479px;top:555px;width:1307px;height:1px;background:#ddd;"></div>
<div style="position:absolute;left:487px;top:564px;width:49px;height:34px;box-sizing:border-box;border:1px solid #6a6a6a;border-right:none;border-radius:4px 0 0 4px;background:#fff;"></div>
<div style="position:absolute;left:535px;top:564px;width:44px;height:34px;border-radius:0 4px 4px 0;background:#286090;box-shadow:inset 0 3px 5px rgba(0,0,0,.125);"></div>
<div style="position:absolute;left:500px;top:571.15px;line-height:20px;font-size:14px;font-weight:400;color:#000;font-family:'Liberation Sans',sans-serif;white-space:nowrap;">Yes</div>
<div style="position:absolute;left:548px;top:571.15px;line-height:20px;font-size:14px;font-weight:400;color:#fff;font-family:'Liberation Sans',sans-serif;white-space:nowrap;">No</div>
<div style="position:absolute;left:596px;top:570px;width:53px;height:22px;box-sizing:border-box;border:1px solid #6a6a6a;border-radius:3px 0 0 3px;background:#fff;"></div><div style="position:absolute;left:622px;top:570px;width:1px;height:22px;background:#6a6a6a;"></div><div style="position:absolute;left:603.2px;top:574.4px;"><svg width="12.7" height="12.7" viewBox="0 0 14 14" style="display:block;"><circle cx="7" cy="7" r="6.1" fill="none" stroke="#000" stroke-width="1.6"/><circle cx="7" cy="4.4" r="0.95" fill="#000"/><path d="M5.8 6.5 H7.5 V9.3 M5.6 9.5 H8.6" stroke="#000" stroke-width="1.2" fill="none"/></svg></div><div style="position:absolute;left:628.9px;top:573.6px;"><svg width="13.7" height="13.7" viewBox="0 0 14 13.5" style="display:block;"><path d="M7.2 1.3 C10.6 1.3 13 3.4 13 6.1 C13 8.8 10.6 10.9 7.2 10.9 C6.3 10.9 5.5 10.75 4.8 10.5 C3.9 11.4 2.6 12.1 1 12.2 C1.9 11.3 2.4 10.3 2.5 9.2 C1.8 8.3 1.4 7.3 1.4 6.1 C1.4 3.4 3.8 1.3 7.2 1.3 Z" fill="none" stroke="#000" stroke-width="1.45" stroke-linejoin="round"/><circle cx="4.7" cy="6.1" r=".8" fill="#000"/><circle cx="7.2" cy="6.1" r=".8" fill="#000"/><circle cx="9.7" cy="6.1" r=".8" fill="#000"/></svg></div>
<div style="position:absolute;left:651.2px;top:572.6px;"><svg width="13.8" height="15.33" viewBox="0 0 13.5 15" style="display:block;"><path d="M3 1 H11 Q12 1 12 2 V10.2 H3 Q1.2 10.2 1.2 12 Q1.2 13.8 3 13.8 H12.4 M1.2 12 V2.8 Q1.2 1 3 1" fill="none" stroke="#1a1a1a" stroke-width="1.75" stroke-linejoin="round" stroke-linecap="round"/><path d="M4.4 4.1 H9.4 M4.4 6.7 H9.4" stroke="#1a1a1a" stroke-width="1.3" fill="none"/><path d="M11.6 10.4 V13.6" stroke="#1a1a1a" stroke-width="1.2"/></svg></div>
<div style="position:absolute;left:670.5px;top:570.15px;line-height:20px;font-size:14px;font-weight:400;color:#444;font-family:'Liberation Sans',sans-serif;white-space:nowrap;">Varicella (Chicken Pox)</div>
<div style="position:absolute;left:1092px;top:575.3px;"><svg width="14" height="13" viewBox="0 0 14 13" style="display:block;"><path d="M0.9 7.0 L5.3 11.2 L13.1 0.7" fill="none" stroke="#3c763d" stroke-width="1.45" stroke-linecap="round" stroke-linejoin="round"/></svg></div>
<div class="inp" style="left:1197px;top:564px;width:186px;"></div>
<div style="position:absolute;left:1197px;top:571.15px;line-height:20px;font-size:14px;font-weight:400;color:#555;font-family:'Liberation Sans',sans-serif;white-space:nowrap;width:173px;text-align:right;">10/20/2017</div>
<div style="position:absolute;left:1399.5px;top:571.15px;line-height:20px;font-size:14px;font-weight:400;color:#333;font-family:'Liberation Sans',sans-serif;white-space:nowrap;">N/A</div>
<div style="position:absolute;left:1702px;top:566px;width:37px;height:30px;box-sizing:border-box;border:1px solid #6a6a6a;border-radius:3px;background:#fff;"><div style="position:absolute;left:10.1px;top:8.3px;"><svg width="15" height="11" viewBox="0 0 15 11" style="display:block;"><path d="M0.9 5.5 C3 2 5.4 0.9 7.5 0.9 C9.6 0.9 12 2 14.1 5.5 C12 9 9.6 10.1 7.5 10.1 C5.4 10.1 3 9 0.9 5.5 Z" fill="none" stroke="#000" stroke-width="1.5" stroke-linejoin="round"/><circle cx="7.5" cy="5.5" r="2.7" fill="#000"/><path d="M7.6 3.9 A1.7 1.7 0 0 0 5.9 5.5" fill="none" stroke="#fff" stroke-width="0.9" stroke-linecap="round" opacity=".85"/></svg></div></div>
<div style="position:absolute;left:488px;top:634.15px;line-height:20px;font-size:14px;font-weight:700;color:#333;font-family:'Liberation Sans',sans-serif;white-space:nowrap;">Tiered Requirement</div>
<div style="position:absolute;left:879.5px;top:634.15px;line-height:20px;font-size:14px;font-weight:700;color:#333;font-family:'Liberation Sans',sans-serif;white-space:nowrap;">Compliance</div>
<div style="position:absolute;left:1010px;top:634.15px;line-height:20px;font-size:14px;font-weight:700;color:#333;font-family:'Liberation Sans',sans-serif;white-space:nowrap;">Complete</div>
<div style="position:absolute;left:1271.5px;top:634.15px;line-height:20px;font-size:14px;font-weight:700;color:#333;font-family:'Liberation Sans',sans-serif;white-space:nowrap;">Expires</div>
<div style="position:absolute;left:1533px;top:634.15px;line-height:20px;font-size:14px;font-weight:700;color:#333;font-family:'Liberation Sans',sans-serif;white-space:nowrap;">Actions</div>
<div style="position:absolute;left:479px;top:662px;width:1307px;height:2px;background:#ddd;"></div>
<div style="position:absolute;left:479px;top:664px;width:1307px;height:46px;background:#f9f9f9;"></div>
<div style="position:absolute;left:487px;top:676px;width:53px;height:22px;box-sizing:border-box;border:1px solid #6a6a6a;border-radius:3px 0 0 3px;background:#fff;"></div><div style="position:absolute;left:513px;top:676px;width:1px;height:22px;background:#6a6a6a;"></div><div style="position:absolute;left:494.2px;top:680.4px;"><svg width="12.7" height="12.7" viewBox="0 0 14 14" style="display:block;"><circle cx="7" cy="7" r="6.1" fill="none" stroke="#000" stroke-width="1.6"/><circle cx="7" cy="4.4" r="0.95" fill="#000"/><path d="M5.8 6.5 H7.5 V9.3 M5.6 9.5 H8.6" stroke="#000" stroke-width="1.2" fill="none"/></svg></div><div style="position:absolute;left:519.9px;top:679.6px;"><svg width="13.7" height="13.7" viewBox="0 0 14 13.5" style="display:block;"><path d="M7.2 1.3 C10.6 1.3 13 3.4 13 6.1 C13 8.8 10.6 10.9 7.2 10.9 C6.3 10.9 5.5 10.75 4.8 10.5 C3.9 11.4 2.6 12.1 1 12.2 C1.9 11.3 2.4 10.3 2.5 9.2 C1.8 8.3 1.4 7.3 1.4 6.1 C1.4 3.4 3.8 1.3 7.2 1.3 Z" fill="none" stroke="#000" stroke-width="1.45" stroke-linejoin="round"/><circle cx="4.7" cy="6.1" r=".8" fill="#000"/><circle cx="7.2" cy="6.1" r=".8" fill="#000"/><circle cx="9.7" cy="6.1" r=".8" fill="#000"/></svg></div>
<div style="position:absolute;left:541.5px;top:679.5px;"><svg width="15.5" height="12.6" viewBox="0 0 16 13" style="display:block;"><g fill="none" stroke="#a94442" stroke-width="1.5" stroke-linecap="round" stroke-linejoin="round"><path d="M0.9 2.9 H3.2 Q4.8 2.9 5.8 4.3 L8.4 8.8 Q9.4 10.2 11 10.2 H14.4"/><path d="M0.9 10.2 H3.2 Q4.6 10.2 5.4 9.0 M8.7 4.1 Q9.5 2.9 11 2.9 H14.4"/><path d="M12.2 0.6 L14.7 2.9 L12.2 5.2 M12.2 7.9 L14.7 10.2 L12.2 12.5"/></g></svg></div>
<div style="position:absolute;left:562px;top:676.15px;line-height:20px;font-size:14px;font-weight:400;color:#444;font-family:'Liberation Sans',sans-serif;white-space:nowrap;">TB (Options Within)</div>
<div style="position:absolute;left:882.2px;top:681.4px;"><svg width="12.3" height="10.9" viewBox="0 0 12.3 10.9" style="display:block;"><path d="M1 1 L11.3 9.9 M11.3 1 L1 9.9" stroke="#a94442" stroke-width="1.5" stroke-linecap="round" fill="none"/></svg></div>
<div style="position:absolute;left:1010.5px;top:678.15px;line-height:20px;font-size:14px;font-weight:400;color:#333;font-family:'Liberation Sans',sans-serif;white-space:nowrap;">---</div>
<div style="position:absolute;left:1271.5px;top:678.15px;line-height:20px;font-size:14px;font-weight:400;color:#333;font-family:'Liberation Sans',sans-serif;white-space:nowrap;">---</div>
<div style="position:absolute;left:1533px;top:672px;width:245px;height:30px;box-sizing:border-box;border:1px solid #6a6a6a;border-radius:3px;background:#fff;"></div>
<div style="position:absolute;left:1637.1px;top:679.6px;"><svg width="13.6" height="13.6" viewBox="0 -0.5 14.5 14.5" style="display:block;"><path fill="#000" d="M8.6 2.0 L12.0 5.4 L4.6 12.8 L0.9 13.5 Q0.5 13.5 0.5 13.1 L1.2 9.4 Z M9.1 1.5 L10.3 0.4 Q11.4 -0.5 12.4 0.4 L13.6 1.6 Q14.5 2.6 13.6 3.7 L12.5 4.9 Z"/><path fill="#fff" d="M2.0 10.6 L3.4 12.0 L1.6 12.4 Z" opacity=".8"/></svg></div>
<div style="position:absolute;left:1654.5px;top:676.84px;line-height:20px;font-size:12px;font-weight:400;color:#000;font-family:'Liberation Sans',sans-serif;white-space:nowrap;">Edit</div>
<div style="position:absolute;left:479px;top:710px;width:1307px;height:1px;background:#ddd;"></div>
<div style="position:absolute;left:487px;top:723px;width:53px;height:22px;box-sizing:border-box;border:1px solid #6a6a6a;border-radius:3px 0 0 3px;background:#fff;"></div><div style="position:absolute;left:513px;top:723px;width:1px;height:22px;background:#6a6a6a;"></div><div style="position:absolute;left:494.2px;top:727.4px;"><svg width="12.7" height="12.7" viewBox="0 0 14 14" style="display:block;"><circle cx="7" cy="7" r="6.1" fill="none" stroke="#000" stroke-width="1.6"/><circle cx="7" cy="4.4" r="0.95" fill="#000"/><path d="M5.8 6.5 H7.5 V9.3 M5.6 9.5 H8.6" stroke="#000" stroke-width="1.2" fill="none"/></svg></div><div style="position:absolute;left:519.9px;top:726.6px;"><svg width="13.7" height="13.7" viewBox="0 0 14 13.5" style="display:block;"><path d="M7.2 1.3 C10.6 1.3 13 3.4 13 6.1 C13 8.8 10.6 10.9 7.2 10.9 C6.3 10.9 5.5 10.75 4.8 10.5 C3.9 11.4 2.6 12.1 1 12.2 C1.9 11.3 2.4 10.3 2.5 9.2 C1.8 8.3 1.4 7.3 1.4 6.1 C1.4 3.4 3.8 1.3 7.2 1.3 Z" fill="none" stroke="#000" stroke-width="1.45" stroke-linejoin="round"/><circle cx="4.7" cy="6.1" r=".8" fill="#000"/><circle cx="7.2" cy="6.1" r=".8" fill="#000"/><circle cx="9.7" cy="6.1" r=".8" fill="#000"/></svg></div>
<div style="position:absolute;left:541.5px;top:726.5px;"><svg width="15.5" height="12.6" viewBox="0 0 16 13" style="display:block;"><g fill="none" stroke="#a94442" stroke-width="1.5" stroke-linecap="round" stroke-linejoin="round"><path d="M0.9 2.9 H3.2 Q4.8 2.9 5.8 4.3 L8.4 8.8 Q9.4 10.2 11 10.2 H14.4"/><path d="M0.9 10.2 H3.2 Q4.6 10.2 5.4 9.0 M8.7 4.1 Q9.5 2.9 11 2.9 H14.4"/><path d="M12.2 0.6 L14.7 2.9 L12.2 5.2 M12.2 7.9 L14.7 10.2 L12.2 12.5"/></g></svg></div>
<div style="position:absolute;left:562px;top:723.15px;line-height:20px;font-size:14px;font-weight:400;color:#444;font-family:'Liberation Sans',sans-serif;white-space:nowrap;">Tiered Test</div>
<div style="position:absolute;left:882.2px;top:728.4px;"><svg width="12.3" height="10.9" viewBox="0 0 12.3 10.9" style="display:block;"><path d="M1 1 L11.3 9.9 M11.3 1 L1 9.9" stroke="#a94442" stroke-width="1.5" stroke-linecap="round" fill="none"/></svg></div>
<div style="position:absolute;left:1010.5px;top:725.15px;line-height:20px;font-size:14px;font-weight:400;color:#333;font-family:'Liberation Sans',sans-serif;white-space:nowrap;">---</div>
<div style="position:absolute;left:1271.5px;top:725.15px;line-height:20px;font-size:14px;font-weight:400;color:#333;font-family:'Liberation Sans',sans-serif;white-space:nowrap;">---</div>
<div style="position:absolute;left:1533px;top:719px;width:245px;height:30px;box-sizing:border-box;border:1px solid #6a6a6a;border-radius:3px;background:#fff;"></div>
<div style="position:absolute;left:1637.1px;top:726.6px;"><svg width="13.6" height="13.6" viewBox="0 -0.5 14.5 14.5" style="display:block;"><path fill="#000" d="M8.6 2.0 L12.0 5.4 L4.6 12.8 L0.9 13.5 Q0.5 13.5 0.5 13.1 L1.2 9.4 Z M9.1 1.5 L10.3 0.4 Q11.4 -0.5 12.4 0.4 L13.6 1.6 Q14.5 2.6 13.6 3.7 L12.5 4.9 Z"/><path fill="#fff" d="M2.0 10.6 L3.4 12.0 L1.6 12.4 Z" opacity=".8"/></svg></div>
<div style="position:absolute;left:1654.5px;top:723.84px;line-height:20px;font-size:12px;font-weight:400;color:#000;font-family:'Liberation Sans',sans-serif;white-space:nowrap;">Edit</div>
<svg width="1818" height="782" viewBox="0 0 1818 782" style="position:absolute;left:0;top:0;z-index:20;pointer-events:none;"><path d="M972.3 289.2 L1494 676.3" stroke="#ee255f" stroke-width="3.4" stroke-linecap="round" fill="none"/><path d="M1506.8 685.8 L1497.6 669 L1487.9 681.6 Z" fill="#ee255f"/><rect x="1527" y="667.4" width="259.4" height="38.3" fill="none" stroke="#ee255f" stroke-width="5" stroke-linejoin="round"/></svg>
<div class="frame"></div>
</body></html>
